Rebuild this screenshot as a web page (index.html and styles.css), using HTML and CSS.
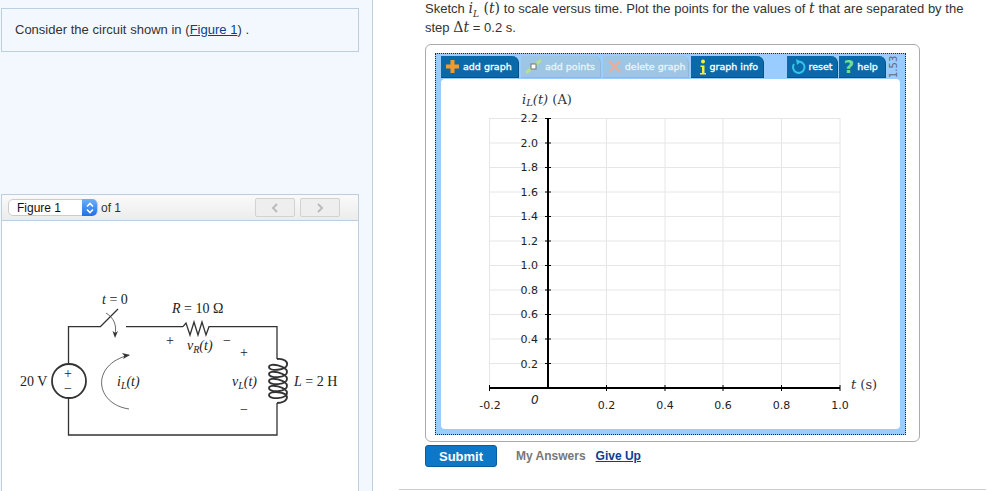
FILE: index.html
```html
<html>
    <head>
        <title>Circuit problem</title>
        <link rel="stylesheet" href="styles.css">
    </head>
    <body>
        <div class="page">
            <!-- left column -->
            <div class="left">
                <div class="intro">Consider the circuit shown in (<a href="#">Figure 1</a>) .</div>
                <div class="figbar">
                    <div class="figselect">
                        <span class="figname">Figure 1</span>
                        <span class="figarrows">
                            <svg width="10" height="14" viewBox="0 0 10 14"><path d="M2 5.5 L5 2.5 L8 5.5 M2 8.5 L5 11.5 L8 8.5" fill="none" stroke="#fff" stroke-width="1.6"/></svg>
                        </span>
                    </div>
                    <span class="figof">of 1</span>
                    <div class="fignav">
                        <span class="navbtn"><svg width="8" height="10" viewBox="0 0 8 10"><path d="M6 1 L2 5 L6 9" fill="none" stroke="#bbb" stroke-width="2"/></svg></span>
                        <span class="navbtn"><svg width="8" height="10" viewBox="0 0 8 10"><path d="M2 1 L6 5 L2 9" fill="none" stroke="#bbb" stroke-width="2"/></svg></span>
                    </div>
                </div>
                <div class="figure">
                    <svg class="circuit" width="356" height="270" viewBox="2 221 356 270">
                        <!-- wires -->
                        <path class="wire" d="M100 326.7 H68.5 V364 M68.5 398 V435 H277 V403 M277 359 V326.7 H211 M183 326.7 H126"/>
                        <path class="wire" d="M100 327 L118 309"/>
                        <path class="wire" d="M183 326.7 L186 323 L190 335 L194 322 L198 335 L202 322 L206 335 L209 326.7 H211"/>
                        <circle class="wire thick" cx="69" cy="381" r="17"/>
                        <!-- coil -->
                        <path class="wire thick" d="M277 359 C284 358 288 362 287 365 C286 370 269 372 269 367 C269 362 287 366 287 372 C287 378 269 379 269 374 C269 369 287 373 287 379 C287 385 269 386 269 381 C269 376 287 380 287 386 C287 392 269 393 269 388 C269 383 287 387 287 393 C287 399 269 400 269 395 C269 390 287 392 287 397 C287 401 282 403 277 403"/>
                        <!-- arrows -->
                        <path class="thin" d="M106 313 C114 318 117 325 115 335"/>
                        <path class="head" d="M115 338 L112.5 331 L115.3 333 L118 331 Z"/>
                        <path class="thin" d="M129 409 C95 404 90 365 129 355"/>
                        <path class="head" d="M130 355 L122 353 L124.5 356 L123 359 Z"/>
                        <!-- labels -->
                        <text class="lbl" x="102" y="304"><tspan class="it">t</tspan> = 0</text>
                        <text class="lbl" x="172" y="313"><tspan class="it">R</tspan> = 10 Ω</text>
                        <text class="lbl" x="166" y="345">+</text>
                        <text class="lbl it" x="187" y="350">v<tspan class="sub" dy="3">R</tspan><tspan dy="-3">(t)</tspan></text>
                        <text class="lbl" x="223" y="345">−</text>
                        <text class="lbl" x="240" y="357">+</text>
                        <text class="lbl" x="240" y="414">−</text>
                        <text class="lbl" x="20" y="386">20 V</text>
                        <text class="lbl" x="64" y="378">+</text>
                        <text class="lbl" x="64" y="393">−</text>
                        <text class="lbl it" x="117" y="386">i<tspan class="sub" dy="3">L</tspan><tspan dy="-3">(t)</tspan></text>
                        <text class="lbl it" x="232" y="386">v<tspan class="sub" dy="3">L</tspan><tspan dy="-3">(t)</tspan></text>
                        <text class="lbl" x="294" y="386"><tspan class="it">L</tspan> = 2 H</text>
                    </svg>
                </div>
            </div>

            <!-- right column -->
            <div class="right">
                <p class="question">Sketch <span class="math"><i>i<sub>L</sub></i> (<i>t</i>)</span> to scale versus time. Plot the points for the values of <span class="math"><i>t</i></span> that are separated by the<br>step <span class="math">Δ<i>t</i></span> = 0.2 s.</p>
                <div class="frame">
                    <div class="tool">
                        <div class="toolbar">
                            <span class="tbtn w-add">
                                <svg class="ico" width="15" height="15" viewBox="0 0 15 15"><path d="M7.5 1 V14 M1 7.5 H14" stroke="#f39a2b" stroke-width="4"/></svg>
                                add graph
                            </span>
                            <span class="tbtn off w-points">
                                <svg class="ico" width="17" height="15" viewBox="0 0 17 15"><path d="M1 14 L16 1" stroke="#b5e08f" stroke-width="3"/><rect x="6" y="5" width="5" height="5" fill="#fff" stroke="#777"/></svg>
                                add points
                            </span>
                            <span class="tbtn off w-delete">
                                <svg class="ico" width="15" height="15" viewBox="0 0 15 15"><path d="M2 2 L13 13 M13 2 L2 13" stroke="#f2ab93" stroke-width="2.4"/></svg>
                                delete graph
                            </span>
                            <span class="tbtn w-info">
                                <svg class="ico" width="8" height="16" viewBox="0 0 8 16"><circle cx="4" cy="2.5" r="2" fill="#f4ee3c"/><path d="M1.5 6.5 H5.5 V14 H7 V15.5 H1 V14 H3 V8 H1.5 Z" fill="#f4ee3c"/></svg>
                                graph info
                            </span>
                            <span class="tbtn w-reset">
                                <svg class="ico" width="15" height="15" viewBox="0 0 15 15"><path d="M8.5 2.5 A5.7 5.7 0 1 1 3 5" fill="none" stroke="#35c3e8" stroke-width="2"/><path d="M5 0 L10 2.5 L6 6 Z" fill="#35c3e8"/></svg>
                                reset
                            </span>
                            <span class="tbtn w-help">
                                <span class="qmark">?</span>
                                help
                            </span>
                            <span class="version">1.53</span>
                        </div>
                        <div class="plot">
                            <svg width="459" height="350" viewBox="441 79 459 350">
                                <path class="grid" d="M489.5 118 V388 M606.5 118 V388 M665 118 V388 M723 118 V388 M781.5 118 V388 M840 118 V388 M489.5 118.5 H840 M489.5 143 H840 M489.5 167.5 H840 M489.5 192 H840 M489.5 216.5 H840 M489.5 241 H840 M489.5 265.5 H840 M489.5 290 H840 M489.5 314.5 H840 M489.5 339 H840 M489.5 363.5 H840"/>
                                <path class="axis" d="M548 118 V388 M489.5 388 H840"/>
                                <path class="tick" d="M545 118.5 H551 M545 143 H551 M545 167.5 H551 M545 192 H551 M545 216.5 H551 M545 241 H551 M545 265.5 H551 M545 290 H551 M545 314.5 H551 M545 339 H551 M545 363.5 H551 M489.5 385 V391 M606.5 385 V391 M665 385 V391 M723 385 V391 M781.5 385 V391 M840 385 V391"/>
                                <text class="mathlbl" x="522" y="104">i<tspan class="sub" dy="2">L</tspan><tspan dy="-2">(t) </tspan><tspan class="up">(A)</tspan></text>
                                <text class="mathlbl" x="851" y="389">t <tspan class="up">(s)</tspan></text>
                                <g class="ylab">
                                    <text x="538" y="122">2.2</text>
                                    <text x="538" y="147">2.0</text>
                                    <text x="538" y="171">1.8</text>
                                    <text x="538" y="196">1.6</text>
                                    <text x="538" y="220">1.4</text>
                                    <text x="538" y="245">1.2</text>
                                    <text x="538" y="269">1.0</text>
                                    <text x="538" y="294">0.8</text>
                                    <text x="538" y="318">0.6</text>
                                    <text x="538" y="343">0.4</text>
                                    <text x="538" y="368">0.2</text>
                                </g>
                                <g class="xlab">
                                    <text x="490" y="409">-0.2</text>
                                    <text x="606.5" y="409">0.2</text>
                                    <text x="665" y="409">0.4</text>
                                    <text x="723" y="409">0.6</text>
                                    <text x="781.5" y="409">0.8</text>
                                    <text x="840" y="409">1.0</text>
                                </g>
                                <text class="zero" x="531" y="404">0</text>
                            </svg>
                        </div>
                    </div>
                </div>
                <div class="actions">
                    <button class="submit">Submit</button>
                    <span class="answers">My Answers</span>
                    <a class="giveup" href="#">Give Up</a>
                </div>
                <div class="rule"></div>
            </div>
        </div>
    </body>
</html>
```

FILE: styles.css
```css
body {
    margin: 0;
    background: #fff;
    color: #333;
    font-family: "Liberation Sans", Arial, sans-serif;
    font-size: 13px;
    overflow: hidden;
}

.page {
    display: flex;
    height: 491px;
}

/* left column */
.left {
    width: 371px;
    height: 483px;
    background: #f3f8ff;
    border-right: 1px solid #bccfe0;
    padding-top: 8px;
    padding-left: 1px;
}

.intro {
    width: 356px;
    height: 42px;
    line-height: 42px;
    border: 1px solid #bccfe0;
    text-indent: 13px;
    font-size: 13px;
    word-spacing: 0.1px;
}

.intro a {
    color: #0b3d91;
}

.figbar {
    display: flex;
    align-items: center;
    width: 356px;
    height: 25px;
    margin-top: 142px;
    border: 1px solid #bccfe0;
    background: linear-gradient(#fafafa, #ececec);
    font-size: 12px;
}

.figselect {
    display: flex;
    align-items: center;
    width: 90px;
    height: 17px;
    margin-left: 6px;
    background: #fff;
    border: 1px solid #ccc;
    border-radius: 5px;
    box-sizing: border-box;
}

.figname {
    flex: 1;
    padding-left: 8px;
    color: #111;
}

.figarrows {
    display: flex;
    align-items: center;
    justify-content: center;
    width: 15px;
    height: 17px;
    background: linear-gradient(#6fb0f7, #1f6fe8);
    border-radius: 0 5px 5px 0;
}

.figof {
    margin-left: 3px;
}

.fignav {
    display: flex;
    gap: 5px;
    margin-left: auto;
    margin-right: 18px;
}

.navbtn {
    display: flex;
    align-items: center;
    justify-content: center;
    width: 40px;
    height: 19px;
    border: 1px solid #d2d2d2;
    border-radius: 2px;
    background: #eee;
    box-sizing: border-box;
}

.figure {
    width: 356px;
    height: 270px;
    background: #fff;
    border-left: 1px solid #bccfe0;
    border-right: 1px solid #bccfe0;
}

.circuit {
    display: block;
}

.wire {
    fill: none;
    stroke: #333;
    stroke-width: 1.3;
}

.thick {
    stroke-width: 1.8;
}

.thin {
    fill: none;
    stroke: #444;
    stroke-width: 0.8;
}

.head {
    fill: #333;
}

.lbl {
    font-family: "Liberation Serif", serif;
    font-size: 14px;
    fill: #222;
}

.it {
    font-style: italic;
}

.sub {
    font-size: 10px;
}

/* right column */
.right {
    margin-left: 52px;
    width: 566px;
}

.question {
    margin: -1px 0 0 0;
    height: 45px;
    line-height: 18px;
    font-size: 13px;
    word-spacing: 0.1px;
    white-space: nowrap;
}

.math {
    font-family: "DejaVu Serif", serif;
    font-size: 14px;
}

.math sub {
    font-size: 9px;
    line-height: 0;
}

.frame {
    width: 484px;
    height: 388px;
    border: 1px solid #aaa;
    border-radius: 6px;
    padding: 8px 0 0 9px;
}

.tool {
    width: 459px;
    height: 374px;
    padding: 2px 5px 4px 5px;
    background: #99ccff;
    border: 1px dotted #222;
}

.toolbar {
    display: flex;
    height: 22px;
    gap: 2px;
    margin-bottom: 1px;
}

.tbtn {
    display: flex;
    align-items: center;
    gap: 3px;
    padding-left: 4px;
    background: #0a69a8;
    border-radius: 0 7px 0 0;
    border-bottom: 1px solid #075282;
    border-right: 1px solid #075282;
    color: #fff;
    font-family: "DejaVu Sans", Verdana, sans-serif;
    font-size: 9.5px;
    -webkit-text-stroke: 0.3px #fff;
    white-space: nowrap;
    box-sizing: border-box;
}

.tbtn.off {
    background: #9cc6e3;
    border-color: #8fb9d6;
    color: #e9f3fa;
    -webkit-text-stroke: 0.3px #e9f3fa;
}

.w-add {
    width: 79px;
}

.w-points {
    width: 81px;
}

.w-delete {
    width: 87px;
}

.w-info {
    width: 74px;
    padding-left: 8px;
}

.w-reset {
    width: 52px;
    margin-left: 21px;
}

.w-help {
    width: 48px;
    margin-left: -1px;
    padding-left: 5px;
}

.ico {
    flex: none;
}

.qmark {
    color: #6fe08f;
    font-size: 18px;
    font-weight: bold;
    line-height: 20px;
    -webkit-text-stroke: 0;
}

.version {
    writing-mode: vertical-rl;
    transform: rotate(180deg);
    font-family: "DejaVu Sans", sans-serif;
    font-size: 10px;
    color: #667;
    text-align: center;
    width: 12px;
}

.plot {
    width: 459px;
    height: 350px;
    background: #fff;
    border-radius: 4px;
}

.plot svg {
    display: block;
}

.grid {
    fill: none;
    stroke: #e6e6e6;
    stroke-width: 1;
}

.axis {
    fill: none;
    stroke: #000;
    stroke-width: 2;
}

.tick {
    fill: none;
    stroke: #000;
    stroke-width: 1;
}

.ylab text,
.xlab text {
    font-family: "DejaVu Sans", Verdana, sans-serif;
    font-size: 11px;
    fill: #222;
}

.ylab text {
    text-anchor: end;
}

.xlab text {
    text-anchor: middle;
}

.zero {
    font-family: "DejaVu Sans", Verdana, sans-serif;
    font-size: 12px;
    font-style: italic;
    fill: #222;
}

.mathlbl {
    font-family: "DejaVu Serif", serif;
    font-size: 13px;
    font-style: italic;
    fill: #333;
}

.up {
    font-style: normal;
}

.actions {
    display: flex;
    align-items: center;
    height: 22px;
    margin-top: 3px;
}

.submit {
    width: 72px;
    height: 22px;
    padding: 0;
    background: #0f77c8;
    border: 1px solid #0b5e9e;
    border-radius: 3px;
    color: #fff;
    font-family: "Liberation Sans", Arial, sans-serif;
    font-size: 13px;
    font-weight: bold;
}

.answers {
    margin-left: 19px;
    color: #777;
    font-size: 12px;
    font-weight: bold;
}

.giveup {
    margin-left: 10px;
    color: #0b3d91;
    font-size: 12px;
    font-weight: bold;
}

.rule {
    width: 587px;
    height: 1px;
    margin-top: 22px;
    margin-left: -26px;
    background: #ccc;
}
```
